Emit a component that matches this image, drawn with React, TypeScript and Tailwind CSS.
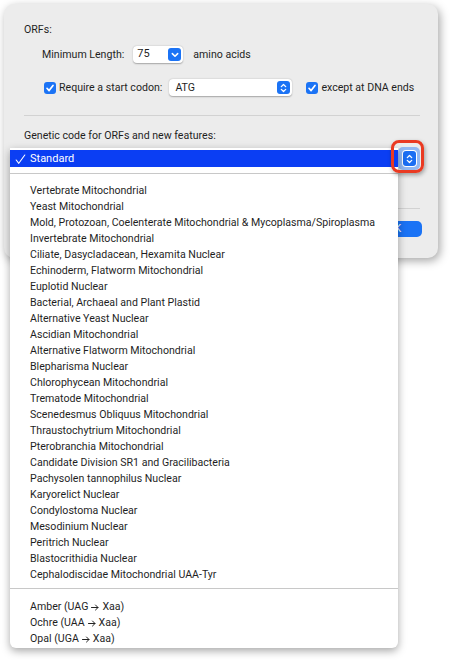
import React from "react";

const FONT = { fontFamily: 'Roboto, "Liberation Sans", Arial, sans-serif' };

const codes = [
  "Vertebrate Mitochondrial",
  "Yeast Mitochondrial",
  "Mold, Protozoan, Coelenterate Mitochondrial & Mycoplasma/Spiroplasma",
  "Invertebrate Mitochondrial",
  "Ciliate, Dasycladacean, Hexamita Nuclear",
  "Echinoderm, Flatworm Mitochondrial",
  "Euplotid Nuclear",
  "Bacterial, Archaeal and Plant Plastid",
  "Alternative Yeast Nuclear",
  "Ascidian Mitochondrial",
  "Alternative Flatworm Mitochondrial",
  "Blepharisma Nuclear",
  "Chlorophycean Mitochondrial",
  "Trematode Mitochondrial",
  "Scenedesmus Obliquus Mitochondrial",
  "Thraustochytrium Mitochondrial",
  "Pterobranchia Mitochondrial",
  "Candidate Division SR1 and Gracilibacteria",
  "Pachysolen tannophilus Nuclear",
  "Karyorelict Nuclear",
  "Condylostoma Nuclear",
  "Mesodinium Nuclear",
  "Peritrich Nuclear",
  "Blastocrithidia Nuclear",
  "Cephalodiscidae Mitochondrial UAA-Tyr",
];

const stops = [
  ["Amber (UAG", "Xaa)"],
  ["Ochre (UAA", "Xaa)"],
  ["Opal (UGA", "Xaa)"],
];

function ChevronDown() {
  return (
    <svg width="8" height="6" viewBox="0 0 8 6">
      <path d="M1.3 1.6 L4 4.3 L6.7 1.6" fill="none" stroke="white" strokeWidth="1.5" strokeLinecap="round" strokeLinejoin="round" />
    </svg>
  );
}

function UpDown() {
  return (
    <svg width="7" height="10" viewBox="0 0 7 10">
      <path d="M1.3 3.6 L3.5 1.5 L5.7 3.6" fill="none" stroke="white" strokeWidth="1.3" strokeLinecap="round" strokeLinejoin="round" />
      <path d="M1.3 6.4 L3.5 8.5 L5.7 6.4" fill="none" stroke="white" strokeWidth="1.3" strokeLinecap="round" strokeLinejoin="round" />
    </svg>
  );
}

function Checkbox() {
  return (
    <div className="flex h-[12px] w-[12px] shrink-0 items-center justify-center rounded-[3px] bg-[#1b73f5]">
      <svg width="10" height="10" viewBox="0 0 10 10">
        <path d="M2 5.3 L4.1 7.6 L8 2.4" fill="none" stroke="white" strokeWidth="1.7" strokeLinecap="round" strokeLinejoin="round" />
      </svg>
    </div>
  );
}

function Arrow() {
  return (
    <svg className="mx-[3px] inline-block align-middle" width="8" height="7" viewBox="0 0 8 7">
      <path d="M0.5 3.5 H7 M4.5 1 L7 3.5 L4.5 6" fill="none" stroke="#222" strokeWidth="1" strokeLinecap="round" strokeLinejoin="round" />
    </svg>
  );
}

export default function App() {
  return (
    <div className="relative h-[660px] w-[450px] overflow-hidden whitespace-nowrap bg-white text-[10.6px] text-[#1f1f1f]" style={FONT}>
      {/* Preferences sheet */}
      <div className="ml-[4px] mt-[4px] h-[254px] w-[434px] rounded-[10px] bg-[#ececec] pl-[20px] pr-[18px] pt-[18px] shadow-[2px_3px_10px_rgba(0,0,0,0.35)]">
        <div className="h-[16px] leading-[16px]">ORFs:</div>

        <div className="mt-[8px] flex h-[17px] items-center pl-[18px]">
          <span>Minimum Length:</span>
          <div className="ml-[9px] flex h-[17px] w-[50px] shrink-0 items-center justify-between rounded-[4px] bg-white pl-[4px] pr-[2px] shadow-[0_0.5px_1.5px_rgba(0,0,0,0.3)]">
            <span className="text-[11px]">75</span>
            <div className="flex h-[13px] w-[13px] items-center justify-center rounded-[3px] bg-[#1b73f5]">
              <ChevronDown />
            </div>
          </div>
          <span className="ml-[10px]">amino acids</span>
        </div>

        <div className="mt-[16px] flex h-[17px] items-center pl-[20px]">
          <Checkbox />
          <span className="ml-[3px]">Require a start codon:</span>
          <div className="ml-[7px] flex h-[17px] w-[123px] shrink-0 items-center justify-between rounded-[4px] bg-white pl-[6px] pr-[2px] shadow-[0_0.5px_1.5px_rgba(0,0,0,0.3)]">
            <span>ATG</span>
            <div className="flex h-[13px] w-[13px] items-center justify-center rounded-[3px] bg-[#1b73f5]">
              <UpDown />
            </div>
          </div>
          <div className="ml-[14px]">
            <Checkbox />
          </div>
          <span className="ml-[3px]">except at DNA ends</span>
        </div>

        <div className="mt-[19px] h-px bg-[#d2d2d2]" />

        <div className="mt-[12px] h-[16px] leading-[16px]">Genetic code for ORFs and new features:</div>

        {/* popup button, mostly hidden beneath the open menu */}
        <div className="mt-[3px] flex h-[23px] justify-end">
          <div className="flex h-[23px] w-[22px] items-center justify-center rounded-[5px] bg-[#93b8f2]">
            <div className="flex h-[15px] w-[13px] items-center justify-center rounded-[3px] bg-[#1b6ef3] ring-1 ring-white">
              <UpDown />
            </div>
          </div>
        </div>

        <div className="mt-[38px] h-px bg-[#d2d2d2]" />

        <div className="mt-[12px] flex justify-end">
          <div className="mr-[-2px] flex h-[16px] w-[64px] items-center justify-center rounded-[5px] bg-[#1b73f5] pl-[8px] text-[11px] text-white">
            OK
          </div>
        </div>
      </div>

      {/* Open genetic code menu */}
      <div className="absolute left-[10px] top-[148px] w-[388px] rounded-b-[6px] bg-white pb-[1px] pt-[2px] shadow-[0_3px_9px_rgba(0,0,0,0.35)]">
        <div className="flex h-[17px] items-center bg-[#0b3ef3] pt-px text-white">
          <svg className="ml-[5px]" width="11" height="11" viewBox="0 0 11 11">
            <path d="M1.2 6 L3.8 9.3 L9.8 1" fill="none" stroke="white" strokeWidth="1.1" strokeLinecap="round" strokeLinejoin="round" />
          </svg>
          <span className="ml-[4px] text-[11px]">Standard</span>
        </div>
        <div className="mt-[6px] h-px bg-[#c8c8c8]" />
        <div className="pt-[9px]">
          {codes.map((c) => (
            <div key={c} className="h-[16px] pl-[20px] leading-[16px]">
              {c}
            </div>
          ))}
        </div>
        <div className="mt-[5px] h-px bg-[#c8c8c8]" />
        <div className="pt-[10px]">
          {stops.map(([a, b]) => (
            <div key={a} className="h-[16px] pl-[20px] leading-[16px]">
              {a}
              <Arrow />
              {b}
            </div>
          ))}
        </div>
      </div>

      {/* Red highlight around the popup stepper */}
      <div className="absolute left-[391px] top-[140px] h-[33px] w-[33px] rounded-[8px] border-[3px] border-[#ea3a22] shadow-[1px_2px_4px_rgba(0,0,0,0.35)]" />
    </div>
  );
}
